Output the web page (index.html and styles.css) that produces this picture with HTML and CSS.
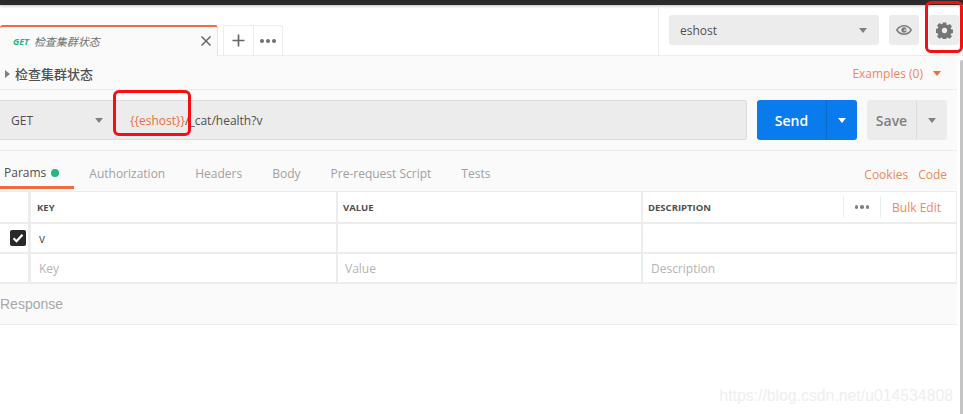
FILE: index.html
```html
<!DOCTYPE html>
<html lang="zh">
<head>
  <meta charset="UTF-8" />
  <title>检查集群状态</title>
  <link rel="stylesheet" href="styles.css">
</head>

<body>
  <div class="topstrip"></div>

  <div class="tabbar">
    <div class="tabs">
      <div class="tab">
        <span class="tab-method">GET</span>
        <span class="tab-name">检查集群状态</span>
        <svg class="tab-close" width="10" height="10" viewBox="0 0 10 10"><path d="M.5 .5l9 9M9.500 .5l-9 9" stroke="#666" stroke-width="1.500" fill="none"/></svg>
      </div>
      <div class="tab-actions">
        <div class="tab-add"><svg width="13" height="13" viewBox="0 0 13 13"><path d="M6.500 0.500v12M0.500 6.500h12" stroke="#666" stroke-width="1.700" fill="none"/></svg></div>
        <div class="tab-more"><i></i><i></i><i></i></div>
      </div>
    </div>
    <div class="envbar">
      <div class="env-select"><span>eshost</span><b class="caret"></b></div>
      <div class="icon-btn">
        <svg width="16" height="10" viewBox="0 0 16 10"><path d="M.8 5C2.600 2.200 5 .8 8 .8s5.400 1.400 7.200 4.200C13.400 7.800 11 9.200 8 9.200S2.600 7.800 .8 5z" fill="none" stroke="#808080" stroke-width="1.600"/><circle cx="8" cy="5" r="2.700" fill="#808080"/><path d="M8 5h2.700" stroke="#ececec" stroke-width="1"/></svg>
      </div>
      <div class="icon-btn">
        <svg width="17" height="17" viewBox="0 0 18 18"><path d="M7.200 0.500h3.600l.4 2.400 1.200.5 2-1.400 2.500 2.500-1.400 2 .5 1.200 2.400.4v3.600l-2.400.4-.5 1.200 1.400 2-2.500 2.500-2-1.400-1.200.5-.4 2.400H7.200l-.4-2.400-1.200-.5-2 1.400-2.500-2.500 1.400-2-.5-1.200-2.400-.4V7.200l2.400-.4.5-1.200-1.400-2 2.500-2.500 2 1.400 1.200-.5z" fill="#757575"/><circle cx="9" cy="9" r="2.800" fill="#ececec"/></svg>
      </div>
    </div>
  </div>

  <div class="main">
    <div class="name-row">
      <div class="name-left"><b class="tri"></b><span>检查集群状态</span></div>
      <div class="examples"><span>Examples (0)</span><b class="caret orange"></b></div>
    </div>

    <div class="url-row">
      <div class="method"><span>GET</span><b class="caret"></b></div>
      <div class="url"><span class="var">{{eshost}}</span>/_cat/health?v</div>
      <div class="send"><span>Send</span><div class="send-drop"><b class="caret white"></b></div></div>
      <div class="save"><span>Save</span><div class="save-drop"><b class="caret"></b></div></div>
    </div>

    <div class="req-tabs">
      <div class="req-tab active">Params<i class="dot"></i></div>
      <div class="req-tab">Authorization</div>
      <div class="req-tab">Headers</div>
      <div class="req-tab">Body</div>
      <div class="req-tab">Pre-request Script</div>
      <div class="req-tab">Tests</div>
      <div class="req-links"><span>Cookies</span><span>Code</span></div>
    </div>

    <div class="params">
      <div class="row head">
        <div class="cell check"></div>
        <div class="cell key">KEY</div>
        <div class="cell value">VALUE</div>
        <div class="cell desc">
          <span>DESCRIPTION</span>
          <div class="desc-tools">
            <div class="desc-more"><i></i><i></i><i></i></div>
            <div class="bulk">Bulk Edit</div>
          </div>
        </div>
      </div>
      <div class="row">
        <div class="cell check">
          <div class="checkbox"><svg width="12" height="10" viewBox="0 0 12 10"><path d="M1.500 5.200l3 3 6-6.500" stroke="#fff" stroke-width="2.200" fill="none"/></svg></div>
        </div>
        <div class="cell key">v</div>
        <div class="cell value"></div>
        <div class="cell desc"></div>
      </div>
      <div class="row empty">
        <div class="cell check"></div>
        <div class="cell key">Key</div>
        <div class="cell value">Value</div>
        <div class="cell desc">Description</div>
      </div>
    </div>

    <div class="response">Response</div>
  </div>

  <div class="scrollbar"></div>
  <div class="mark mark-url"></div>
  <div class="mark mark-gear"></div>
  <div class="watermark">https://blog.csdn.net/u014534808</div>
</body>
</html>
```

FILE: styles.css
```css
html, body {
  margin: 0;
  padding: 0;
}

body {
  width: 963px;
  height: 414px;
  overflow: hidden;
  position: relative;
  background: #fff;
  font-family: "Open Sans", "Noto Sans CJK SC", sans-serif;
  font-size: 12px;
  color: #505050;
}

.topstrip {
  height: 5px;
  background: #2b2b2b;
  box-shadow: 0 1px 3px rgba(0, 0, 0, 0.25);
}

.caret {
  display: block;
  width: 0;
  height: 0;
  border-left: 4.500px solid transparent;
  border-right: 4.500px solid transparent;
  border-top: 5px solid #808080;
}

.caret.orange { border-top-color: #f26b3a; }
.caret.white { border-top-color: #fff; }

/* tab bar */
.tabbar {
  display: flex;
  justify-content: space-between;
  height: 51px;
  width: 963px;
  box-sizing: border-box;
  border-bottom: 1px solid #ececec;
}

.tabs {
  display: flex;
  align-items: flex-end;
}

.tab {
  display: flex;
  align-items: center;
  width: 218px;
  height: 31px;
  box-sizing: border-box;
  background: #fafafa;
  border-top: 2px solid #f26b3a;
  border-right: 1px solid #e4e4e4;
  border-radius: 3px 3px 0 0;
  padding: 0 5px 1px 13px;
  margin-bottom: -1px;
}

.tab-method {
  font-size: 9px;
  font-weight: 700;
  font-style: italic;
  color: #26b47f;
  margin-right: 5px;
}

.tab-name {
  font-size: 11px;
  font-style: italic;
  color: #707070;
  flex: 1;
}

.tab-close { margin-right: 1px; }

.tab-actions {
  display: flex;
  height: 30px;
  box-sizing: border-box;
  margin-left: 5px;
  border: 1px solid #ececec;
  border-bottom: none;
  border-radius: 3px 3px 0 0;
}

.tab-add {
  width: 29px;
  border-right: 1px solid #ececec;
  display: flex;
  align-items: center;
  justify-content: center;
}

.tab-more {
  width: 28px;
  display: flex;
  align-items: center;
  justify-content: center;
  gap: 2px;
}

.tab-more i, .desc-more i {
  display: block;
  width: 4px;
  height: 4px;
  border-radius: 50%;
  background: #707070;
}

.envbar {
  display: flex;
  align-items: center;
  gap: 10px;
  width: 305px;
  height: 50px;
  box-sizing: border-box;
  border-left: 1px solid #ececec;
  padding: 0 4px 0 10px;
}

.env-select {
  width: 210px;
  height: 30px;
  box-sizing: border-box;
  display: flex;
  align-items: center;
  justify-content: space-between;
  padding: 0 12px 0 11px;
  background: #ececec;
  border-radius: 3px;
  color: #505050;
}

.icon-btn {
  width: 30px;
  height: 30px;
  background: #ececec;
  border-radius: 3px;
  display: flex;
  align-items: center;
  justify-content: center;
}

/* request area */
.main {
  width: 957px;
  background: #fafafa;
}

.name-row {
  display: flex;
  justify-content: space-between;
  align-items: center;
  height: 34px;
  box-sizing: border-box;
  border-bottom: 1px solid #ececec;
  padding: 2px 16px 0 5px;
}

.name-left {
  display: flex;
  align-items: center;
  font-size: 13px;
  font-weight: 500;
  color: #505050;
}

.tri {
  display: block;
  width: 0;
  height: 0;
  border-top: 4px solid transparent;
  border-bottom: 4px solid transparent;
  border-left: 5px solid #808080;
  margin-right: 5px;
}

.examples {
  display: flex;
  align-items: center;
  gap: 10px;
  color: #f4855a;
}

.url-row {
  display: flex;
  align-items: center;
  height: 61px;
  box-sizing: border-box;
  border-bottom: 1px solid #ececec;
}

.method {
  width: 115px;
  height: 40px;
  box-sizing: border-box;
  display: flex;
  align-items: center;
  justify-content: space-between;
  padding: 0 12px 0 11px;
  background: #ececec;
  border: 1px solid #dcdcdc;
  border-left: none;
  border-right: none;
  font-weight: 500;
}

.url {
  width: 632px;
  height: 40px;
  box-sizing: border-box;
  display: flex;
  align-items: center;
  padding-left: 14px;
  background: #ececec;
  border: 1px solid #dcdcdc;
  border-radius: 0 2px 2px 0;
}

.var { color: #f26b3a; }

.send {
  display: flex;
  align-items: center;
  width: 100px;
  height: 40px;
  margin-left: 10px;
  background: #097bed;
  border-radius: 3px;
  color: #fff;
  font-size: 14px;
  font-weight: 600;
}

.send span {
  width: 69px;
  text-align: center;
}

.send-drop {
  flex: 1;
  height: 100%;
  border-left: 1px solid #0a6bcc;
  display: flex;
  align-items: center;
  justify-content: center;
}

.save {
  display: flex;
  align-items: center;
  width: 80px;
  height: 40px;
  margin-left: 10px;
  background: #ececec;
  border-radius: 3px;
  color: #808080;
  font-size: 14px;
  font-weight: 600;
}

.save span {
  width: 49px;
  text-align: center;
}

.save-drop {
  flex: 1;
  height: 100%;
  border-left: 1px solid #dcdcdc;
  display: flex;
  align-items: center;
  justify-content: center;
}

.req-tabs {
  display: flex;
  height: 41px;
  box-sizing: border-box;
  border-bottom: 1px solid #ececec;
}

.req-tab {
  display: flex;
  align-items: center;
  margin-left: 16px;
  padding: 5px 7px 0;
  color: #a0a0a0;
}

.req-tab.active {
  margin-left: 0;
  padding: 8px 15px 0 4px;
  color: #505050;
  border-bottom: 3px solid #f26b3a;
  height: 38px;
  box-sizing: border-box;
}

.req-tab.active + .req-tab {
  margin-left: 0;
  padding-left: 15px;
}

.dot {
  width: 8px;
  height: 8px;
  border-radius: 50%;
  background: #26b47f;
  margin-left: 5px;
}

.req-links {
  display: flex;
  gap: 10px;
  margin-left: auto;
  padding: 6px 10px 0 0;
  align-items: center;
  color: #f4855a;
}

/* params table */
.params {
  background: #fff;
  border-bottom: 2px solid #ececec;
  border-right: 1px solid #ececec;
}

.row {
  display: flex;
  height: 30px;
  box-sizing: border-box;
  border-bottom: 2px solid #ececec;
}

.row.head { height: 32px; }
.row:last-child { height: 28px; border-bottom: none; }

.cell {
  display: flex;
  align-items: center;
  box-sizing: border-box;
  border-right: 2px solid #ececec;
  color: #505050;
  font-size: 12px;
}

.cell.check {
  width: 31px;
  justify-content: center;
  border-right-width: 3px;
}

.cell.key { width: 307px; padding-left: 8px; }
.cell.value { width: 305px; padding-left: 7px; }
.cell.desc { flex: 1; border-right: none; justify-content: space-between; padding-left: 8px; }

.head .cell {
  font-size: 9.500px;
  font-weight: 700;
  color: #505050;
}

.head .cell.key { padding-left: 6px; }
.head .cell.value { padding-left: 5px; }
.head .cell.desc { padding-left: 5px; }

.empty .cell { color: #b4b4b4; }

.checkbox {
  width: 16px;
  height: 16px;
  border-radius: 2px;
  background: #282828;
  display: flex;
  align-items: center;
  justify-content: center;
  margin-left: 8px;
  flex: none;
}

.desc-tools {
  display: flex;
  align-items: center;
}

.desc-more {
  display: flex;
  align-items: center;
  justify-content: center;
  gap: 2px;
  width: 36px;
  height: 22px;
  border-left: 1px solid #ececec;
  border-right: 1px solid #ececec;
}

.desc-more i {
  width: 3.500px;
  height: 3.500px;
  background: #808080;
}

.bulk {
  font-size: 12px;
  font-weight: 400;
  color: #f4855a;
  padding: 0 15px 0 11px;
}

.response {
  height: 41px;
  box-sizing: border-box;
  border-bottom: 1px solid #ececec;
  display: flex;
  align-items: center;
  font-family: "Liberation Sans", sans-serif;
  font-size: 14px;
  color: #a8a8a8;
}

/* overlays */
.scrollbar {
  position: absolute;
  left: 960px;
  top: 60px;
  width: 4px;
  height: 354px;
  background: #c4c4c4;
  border-radius: 2px 0 0 0;
}

.mark {
  position: absolute;
  box-sizing: border-box;
  border: 3px solid #f41010;
  border-radius: 6px;
}

.mark-url {
  left: 113px;
  top: 90px;
  width: 78px;
  height: 46px;
}

.mark-gear {
  left: 925px;
  top: 1px;
  width: 38px;
  height: 52px;
}

.watermark {
  position: absolute;
  right: 10px;
  bottom: 9px;
  font-family: "Liberation Sans", sans-serif;
  font-size: 15.800px;
  color: #eeeeee;
}
```
